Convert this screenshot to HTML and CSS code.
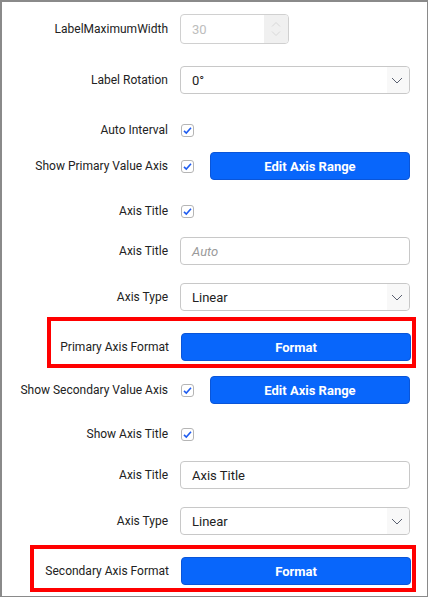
FILE: index.html
```html
<!DOCTYPE html>
<html>
<head>
<meta charset="utf-8">
<link rel="stylesheet" href="styles.css">
</head>
<body>
<div class="panel">
  <div class="row r1">
    <div class="label">LabelMaximumWidth</div>
    <div class="ctrl">
      <div class="numeric">
        <span class="num-val">30</span>
        <span class="spin">
          <svg width="10" height="16" viewBox="0 0 10 16"><path d="M1 5.5 L5 1.5 L9 5.5" fill="none" stroke="#d8d8d8" stroke-width="1"/><path d="M1 10.5 L5 14.5 L9 10.5" fill="none" stroke="#d8d8d8" stroke-width="1"/></svg>
        </span>
      </div>
    </div>
  </div>

  <div class="row r2">
    <div class="label">Label Rotation</div>
    <div class="ctrl">
      <div class="select"><span class="sel-val">0°</span><span class="chev"><svg width="12" height="7" viewBox="0 0 12 7"><path d="M1 1 L6 6 L11 1" fill="none" stroke="#5a6070" stroke-width="1"/></svg></span></div>
    </div>
  </div>

  <div class="row r3 short">
    <div class="label">Auto Interval</div>
    <div class="ctrl"><span class="cb"><svg width="11" height="11" viewBox="0 0 11 11"><path d="M2 5.8 L4.3 8 L9 2.8" fill="none" stroke="#1f5cf0" stroke-width="1.6"/></svg></span></div>
  </div>

  <div class="row r4">
    <div class="label">Show Primary Value Axis</div>
    <div class="ctrl split"><span class="cb"><svg width="11" height="11" viewBox="0 0 11 11"><path d="M2 5.8 L4.3 8 L9 2.8" fill="none" stroke="#1f5cf0" stroke-width="1.6"/></svg></span><button class="btn narrow">Edit Axis Range</button></div>
  </div>

  <div class="row r5 short">
    <div class="label">Axis Title</div>
    <div class="ctrl"><span class="cb"><svg width="11" height="11" viewBox="0 0 11 11"><path d="M2 5.8 L4.3 8 L9 2.8" fill="none" stroke="#1f5cf0" stroke-width="1.6"/></svg></span></div>
  </div>

  <div class="row r6">
    <div class="label">Axis Title</div>
    <div class="ctrl"><div class="text placeholder">Auto</div></div>
  </div>

  <div class="row r7">
    <div class="label">Axis Type</div>
    <div class="ctrl">
      <div class="select"><span class="sel-val">Linear</span><span class="chev"><svg width="12" height="7" viewBox="0 0 12 7"><path d="M1 1 L6 6 L11 1" fill="none" stroke="#5a6070" stroke-width="1"/></svg></span></div>
    </div>
  </div>

  <div class="row hl hl1">
    <div class="label">Primary Axis Format</div>
    <div class="ctrl"><button class="btn">Format</button></div>
  </div>

  <div class="row r9">
    <div class="label">Show Secondary Value Axis</div>
    <div class="ctrl split"><span class="cb"><svg width="11" height="11" viewBox="0 0 11 11"><path d="M2 5.8 L4.3 8 L9 2.8" fill="none" stroke="#1f5cf0" stroke-width="1.6"/></svg></span><button class="btn narrow">Edit Axis Range</button></div>
  </div>

  <div class="row r10 short">
    <div class="label">Show Axis Title</div>
    <div class="ctrl"><span class="cb"><svg width="11" height="11" viewBox="0 0 11 11"><path d="M2 5.8 L4.3 8 L9 2.8" fill="none" stroke="#1f5cf0" stroke-width="1.6"/></svg></span></div>
  </div>

  <div class="row r11">
    <div class="label">Axis Title</div>
    <div class="ctrl"><div class="text">Axis Title</div></div>
  </div>

  <div class="row r12">
    <div class="label">Axis Type</div>
    <div class="ctrl">
      <div class="select"><span class="sel-val">Linear</span><span class="chev"><svg width="12" height="7" viewBox="0 0 12 7"><path d="M1 1 L6 6 L11 1" fill="none" stroke="#5a6070" stroke-width="1"/></svg></span></div>
    </div>
  </div>

  <div class="row hl hl2">
    <div class="label">Secondary Axis Format</div>
    <div class="ctrl"><button class="btn">Format</button></div>
  </div>
</div>
</body>
</html>
```

FILE: styles.css
```css
* { box-sizing: border-box; }
html, body { margin: 0; padding: 0; background: #fff; }
body { font-family: Roboto, "Liberation Sans", Arial, sans-serif; }

.panel {
  width: 428px;
  height: 597px;
  border: 2px solid #8a8a8a;
  border-right-width: 1px;
  border-bottom-width: 1px;
  background: #fff;
  display: flex;
  flex-direction: column;
  padding: 12px 17px 0 0;
  overflow: hidden;
}

.row {
  display: grid;
  grid-template-columns: 1fr 230px;
  column-gap: 12px;
  align-items: center;
  height: 28px;
}
.row.short { height: 12px; }

.label {
  text-align: right;
  font-size: 12px;
  color: #222;
  white-space: nowrap;
}

.ctrl { display: flex; align-items: center; }
.ctrl.split { gap: 16px; }

.r1 { height: 30px; }
.r2 { margin-top: 22px; }
.r3 { margin-top: 29px; }
.r4 { margin-top: 17px; }
.r5 { margin-top: 24px; }
.r6 { margin-top: 21px; }
.r7 { margin-top: 18px; }
.r9 { margin-top: 8px; }
.r10 { margin-top: 23px; }
.r11 { margin-top: 22px; }
.r12 { margin-top: 18px; }

.hl {
  border: 4px solid #ff0000;
  height: auto;
  margin-right: -6px;
  padding: 12px 1px 3px 0;
}
.hl1 { margin-top: 6px; margin-left: 45px; }
.hl2 { margin-top: 10px; margin-left: 28px; padding-top: 8px; }

.numeric {
  width: 109px;
  height: 30px;
  border: 1px solid #d0d0d0;
  border-radius: 4px;
  display: flex;
  align-items: stretch;
  overflow: hidden;
}
.num-val {
  flex: 1;
  display: flex;
  align-items: center;
  padding-left: 11px;
  font-size: 13px;
  color: #bdbdbd;
}
.spin {
  width: 24px;
  background: #f0f0f0;
  display: flex;
  align-items: center;
  justify-content: center;
}

.select, .text {
  width: 230px;
  height: 28px;
  border: 1px solid #c8c8c8;
  border-radius: 4px;
  display: flex;
  align-items: center;
  font-size: 13px;
  color: #222;
}
.sel-val { flex: 1; padding-left: 11px; }
.chev {
  width: 22px;
  height: 100%;
  background: #f8f8f8;
  border-radius: 0 4px 4px 0;
  display: flex;
  align-items: center;
  justify-content: center;
  padding-right: 2px;
}
.text { padding-left: 11px; }
.text.placeholder { color: #9a9a9a; font-style: italic; }

.cb {
  width: 13px;
  height: 13px;
  margin-left: 1px;
  border: 1px solid #b5b5b5;
  border-radius: 3px;
  display: flex;
  align-items: center;
  justify-content: center;
  background: #fff;
}

.btn {
  width: 230px;
  height: 28px;
  border: 1px solid #0a55d8;
  border-radius: 4px;
  background: #0866fb;
  color: #fff;
  font-family: Roboto, "Liberation Sans", Arial, sans-serif;
  font-weight: bold;
  font-size: 13px;
  padding: 0;
  cursor: pointer;
}
.btn.narrow { width: 200px; }
```
